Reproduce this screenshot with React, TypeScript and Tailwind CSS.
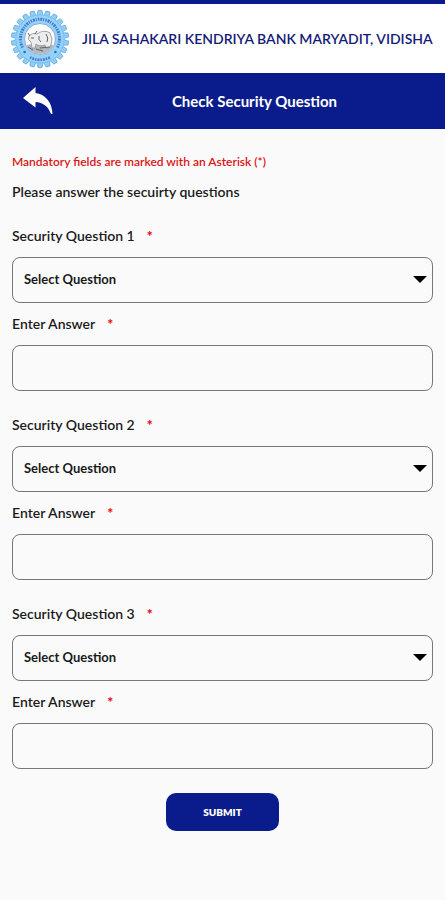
import { useState } from "react";

interface FieldProps {
  id: number;
}

const questions = [
  "What is your pet name?",
  "What is your birth place?",
  "What is your favourite colour?",
];

const teeth = Array.from({ length: 22 }, (_, i) => (i * 360) / 22);

const BankLogo = () => (
  <svg viewBox="0 0 60 60" className="size-[60px] shrink-0" aria-hidden="true">
    <g fill="#8fd0f8" stroke="#5b9edb" strokeWidth="0.7">
      {teeth.map((a) => (
        <path key={a} d="M27.2 6 L28 1.4 H32 L32.8 6 Z" transform={`rotate(${a} 30 30)`} />
      ))}
    </g>
    <circle cx="30" cy="30" r="25" fill="#93d3fa" />
    <circle cx="30" cy="30" r="24.2" fill="none" stroke="#74b9ee" strokeWidth="0.8" />
    {/* lettering round the ring */}
    <path d="M12.6 38.5 A19.5 19.5 0 1 1 47.4 38.5" fill="none" stroke="#4a78cc" strokeWidth="3" strokeDasharray="1.4 1 2 0.9 1 1.2" />
    <path d="M20 48.3 A21 21 0 0 0 40 48.3" fill="none" stroke="#4a78cc" strokeWidth="2.6" strokeDasharray="1.5 1 2 0.9" />
    <circle cx="14.6" cy="43" r="1.3" fill="#3a62c0" />
    <circle cx="45.4" cy="43" r="1.3" fill="#3a62c0" />
    <circle cx="30" cy="30" r="15.5" fill="#fbfbfb" stroke="#7fa6cc" strokeWidth="0.9" />
    <path d="M16.5 36 Q30 33 43.5 36 Q40 44.5 30 44.8 Q20 44.5 16.5 36Z" fill="#b4b8bd" />
    <path d="M19 27 Q22 23 27 25 Q34 20 40 24 Q43.500 30 41 36 L39 39 H36 L35 36 Q29 38 26 35 L25 39 H22 L21 33 Q17 31 19 27Z" fill="#ededed" stroke="#8b9096" strokeWidth="0.8" />
    <path d="M20 27 L18 24 M25 25 L27 22 M21 29 H24 M29 27 Q28 31 31 33 M36 25 Q39 29 37 33 M18 38 L23 41 M26 40 L33 42 M30 39 L40 38" fill="none" stroke="#5d6268" strokeWidth="1" />
  </svg>
);

const SecurityField = ({ id }: FieldProps) => {
  const [question, setQuestion] = useState("");
  const [answer, setAnswer] = useState("");

  return (
    <div className="flex flex-col gap-[11px]">
      <label htmlFor={`question-${id}`} className="flex gap-3 text-[14px] leading-5 font-semibold">
        Security Question {id} <span className="font-black text-red-600">*</span>
      </label>
      <div className="relative">
        <select
          id={`question-${id}`}
          value={question}
          onChange={(e) => setQuestion(e.target.value)}
          className="block h-[46px] w-full appearance-none rounded-lg border border-[#777] bg-transparent px-[11px] text-[13px] font-bold"
        >
          <option value="">Select Question</option>
          {questions.map((q) => (
            <option key={q}>{q}</option>
          ))}
        </select>
        <svg viewBox="0 0 14 7" className="pointer-events-none absolute top-[19px] right-[6px] h-[7px] w-[14px]" aria-hidden="true">
          <path d="M0 0 H14 L7 7 Z" fill="#000" />
        </svg>
      </div>
      <label htmlFor={`answer-${id}`} className="flex gap-3 text-[14px] leading-5 font-semibold">
        Enter Answer <span className="font-black text-red-600">*</span>
      </label>
      <input
        id={`answer-${id}`}
        type="text"
        value={answer}
        onChange={(e) => setAnswer(e.target.value)}
        className="block h-[46px] w-full rounded-lg border border-[#777] bg-transparent px-[11px] text-[13px] font-bold"
      />
    </div>
  );
};

const App = () => {
  return (
    <div className="min-h-screen bg-[#fafafa] font-[Lato,Carlito,sans-serif] text-[#1a1a1a]">
      <header className="border-t-4 border-[#0a1c8c] bg-white">
        <div className="flex h-[69px] items-center gap-3 px-[10px]">
          <BankLogo />
          <h1 className="text-[14px] font-semibold whitespace-nowrap text-[#151a78]">
            JILA SAHAKARI KENDRIYA BANK MARYADIT, VIDISHA
          </h1>
        </div>
        <div className="grid h-14 grid-cols-[1fr_auto_1fr] items-center bg-[#0a1c8c] px-[23px] text-white">
          <button type="button" aria-label="Back" className="w-8">
            <svg viewBox="0 0 30 28" className="h-7 w-[30px]" fill="#fff" aria-hidden="true">
              <path d="M0 11 L12.5 0 V6 C22 7 29 15 29.5 27 H28 C25 19 20 15.500 12.500 15 V20.500 Z" />
            </svg>
          </button>
          <h2 className="pl-16 text-[15px] font-bold">Check Security Question</h2>
        </div>
      </header>

      <form className="px-3 pt-6" onSubmit={(e) => e.preventDefault()}>
        <p className="text-[12px] leading-[18px] font-semibold text-[#dc1414]">
          Mandatory fields are marked with an Asterisk (*)
        </p>
        <p className="mt-[11px] text-[14px] leading-5 font-semibold">Please answer the secuirty questions</p>

        <div className="mt-6 flex flex-col gap-6">
          <SecurityField id={1} />
          <SecurityField id={2} />
          <SecurityField id={3} />
        </div>

        <button
          type="submit"
          className="mx-auto mt-6 block h-[38px] w-[113px] rounded-[10px] bg-[#0a1c8c] text-[10px] font-extrabold text-white"
        >
          SUBMIT
        </button>
      </form>
    </div>
  );
};

export default App;
